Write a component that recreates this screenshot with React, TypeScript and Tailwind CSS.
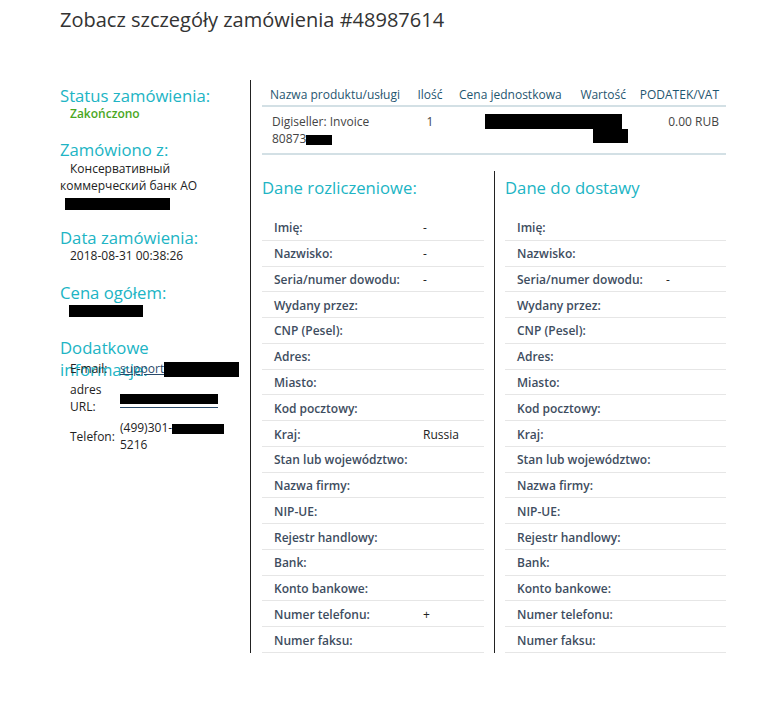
import React from "react";

const billing: [string, string][] = [
  ["Imię:", "-"],
  ["Nazwisko:", "-"],
  ["Seria/numer dowodu:", "-"],
  ["Wydany przez:", ""],
  ["CNP (Pesel):", ""],
  ["Adres:", ""],
  ["Miasto:", ""],
  ["Kod pocztowy:", ""],
  ["Kraj:", "Russia"],
  ["Stan lub województwo:", ""],
  ["Nazwa firmy:", ""],
  ["NIP-UE:", ""],
  ["Rejestr handlowy:", ""],
  ["Bank:", ""],
  ["Konto bankowe:", ""],
  ["Numer telefonu:", "+"],
  ["Numer faksu:", ""],
];

const shipping: [string, string][] = billing.map(([label]) => [label, label === "Seria/numer dowodu:" ? "-" : ""]);

function Heading({ children }: { children: React.ReactNode }) {
  return <h2 className="text-[16.7px] leading-[20px] text-[#20b4c4]">{children}</h2>;
}

function Bar({ className }: { className: string }) {
  return <span className={"inline-block bg-black align-middle " + className}></span>;
}

function DataColumn({ title, rows }: { title: string; rows: [string, string][] }) {
  return (
    <div className="flex flex-col pt-[7px]">
      <Heading>{title}</Heading>
      <div className="mt-[17px]">
        {rows.map(([label, value]) => (
          <div key={label} className="flex h-[25.77px] items-center border-b border-[#e6e6e6] pl-[12px] pt-[2px] text-[12px]">
            <div className="w-[149px] shrink-0 font-semibold text-[#3e4d60]">{label}</div>
            <div className="text-[#222]">{value}</div>
          </div>
        ))}
      </div>
    </div>
  );
}

export default function App() {
  return (
    <div className="min-h-[725px] bg-white pl-[60px] font-['Open_Sans',sans-serif] text-[#222]">
      <h1 className="pt-[7px] text-[20px] leading-[26px] text-[#333]">Zobacz szczegóły zamówienia #48987614</h1>

      <div className="mt-[47px] flex">
        {/* left summary */}
        <div className="w-[190px] shrink-0 pt-[6px] text-[12px]">
          <Heading>Status zamówienia:</Heading>
          <div className="pl-[10px] leading-[16px] font-semibold text-[#4aa71e]">Zakończono</div>

          <div className="mt-[18px]">
            <Heading>Zamówiono z:</Heading>
          </div>
          <div className="w-[180px] indent-[10px] leading-[17px]">
            Консервативный коммерческий банк АО
            <div className="indent-0 pl-[5px]">
              <Bar className="h-[12px] w-[105px]" />
            </div>
          </div>

          <div className="mt-[17px]">
            <Heading>Data zamówienia:</Heading>
          </div>
          <div className="pl-[10px] leading-[16px]">2018-08-31 00:38:26</div>

          <div className="mt-[19px]">
            <Heading>Cena ogółem:</Heading>
          </div>
          <div className="flex h-[16px] items-center pl-[9px]">
            <Bar className="h-[12px] w-[74px]" />
          </div>

          <div className="mt-[18px]">
            <h2 className="w-[120px] text-[16.7px] leading-[22px] text-[#20b4c4]">Dodatkowe informacje:</h2>
          </div>
          {/* the info table sits over the heading's second line, as on the page */}
          <table className="relative -mt-[23px] w-[180px] border-collapse leading-[17px]">
            <tbody>
              <tr>
                <td className="w-[60px] py-[2px] pl-[10px] align-middle">E-mail:</td>
                <td className="py-[2px] align-middle">
                  <span className="text-[#2a4a6a] underline">support</span>
                  <Bar className="h-[15px] w-[75px]" />
                </td>
              </tr>
              <tr>
                <td className="py-[2px] pl-[10px] align-middle">adres URL:</td>
                <td className="py-[2px] align-middle">
                  <span className="inline-block border-b border-[#2a4a6a] pb-[1px]">
                    <Bar className="h-[10px] w-[98px]" />
                  </span>
                </td>
              </tr>
              <tr>
                <td className="py-[2px] pl-[10px] align-middle">Telefon:</td>
                <td className="py-[2px] align-middle">
                  (499)301-<Bar className="h-[10px] w-[52px]" />
                  <br />
                  5216
                </td>
              </tr>
            </tbody>
          </table>
        </div>

        <div className="w-px self-stretch bg-[#222]"></div>

        {/* right side */}
        <div className="ml-[11px] w-[464px]">
          <div className="grid grid-cols-[147px_42px_115px_67px_93px] text-[12px] leading-[16px]">
            <div className="border-b-2 border-[#d3e0e5] pt-[7px] pb-[2px] pl-[8px] text-[#1f5670]">Nazwa produktu/usługi</div>
            <div className="border-b-2 border-[#d3e0e5] pt-[7px] pb-[2px] text-center text-[#1f5670]">Ilość</div>
            <div className="border-b-2 border-[#d3e0e5] pt-[7px] pb-[2px] pl-[8px] text-[#1f5670]">Cena jednostkowa</div>
            <div className="border-b-2 border-[#d3e0e5] pt-[7px] pb-[2px] pr-[7px] text-right text-[#1f5670]">Wartość</div>
            <div className="border-b-2 border-[#d3e0e5] pt-[7px] pb-[2px] pr-[7px] text-right text-[#1f5670]">PODATEK/VAT</div>

            <div className="border-b-2 border-[#d3e0e5] pt-[6px] pb-[6px] pl-[10px] leading-[17px] text-[#444]">
              Digiseller: Invoice
              <br />
              80873<Bar className="h-[10px] w-[26px]" />
            </div>
            <div className="border-b-2 border-[#d3e0e5] pt-[6px] text-center leading-[17px] text-[#444]">1</div>
            <div className="border-b-2 border-[#d3e0e5] pt-[7px]">
              <div className="ml-[34px] h-[15px] w-[137px] bg-black"></div>
              <div className="ml-[142px] h-[14px] w-[35px] bg-black"></div>
            </div>
            <div className="border-b-2 border-[#d3e0e5]"></div>
            <div className="border-b-2 border-[#d3e0e5] pt-[6px] pr-[7px] text-right leading-[17px] text-[#444]">0.00 RUB</div>
          </div>

          <div className="mt-[16px] flex">
            <div className="w-[222px] shrink-0">
              <DataColumn title="Dane rozliczeniowe:" rows={billing} />
            </div>
            <div className="mx-[10px] w-px self-stretch bg-[#222]"></div>
            <div className="flex-1">
              <DataColumn title="Dane do dostawy" rows={shipping} />
            </div>
          </div>
        </div>
      </div>
    </div>
  );
}
